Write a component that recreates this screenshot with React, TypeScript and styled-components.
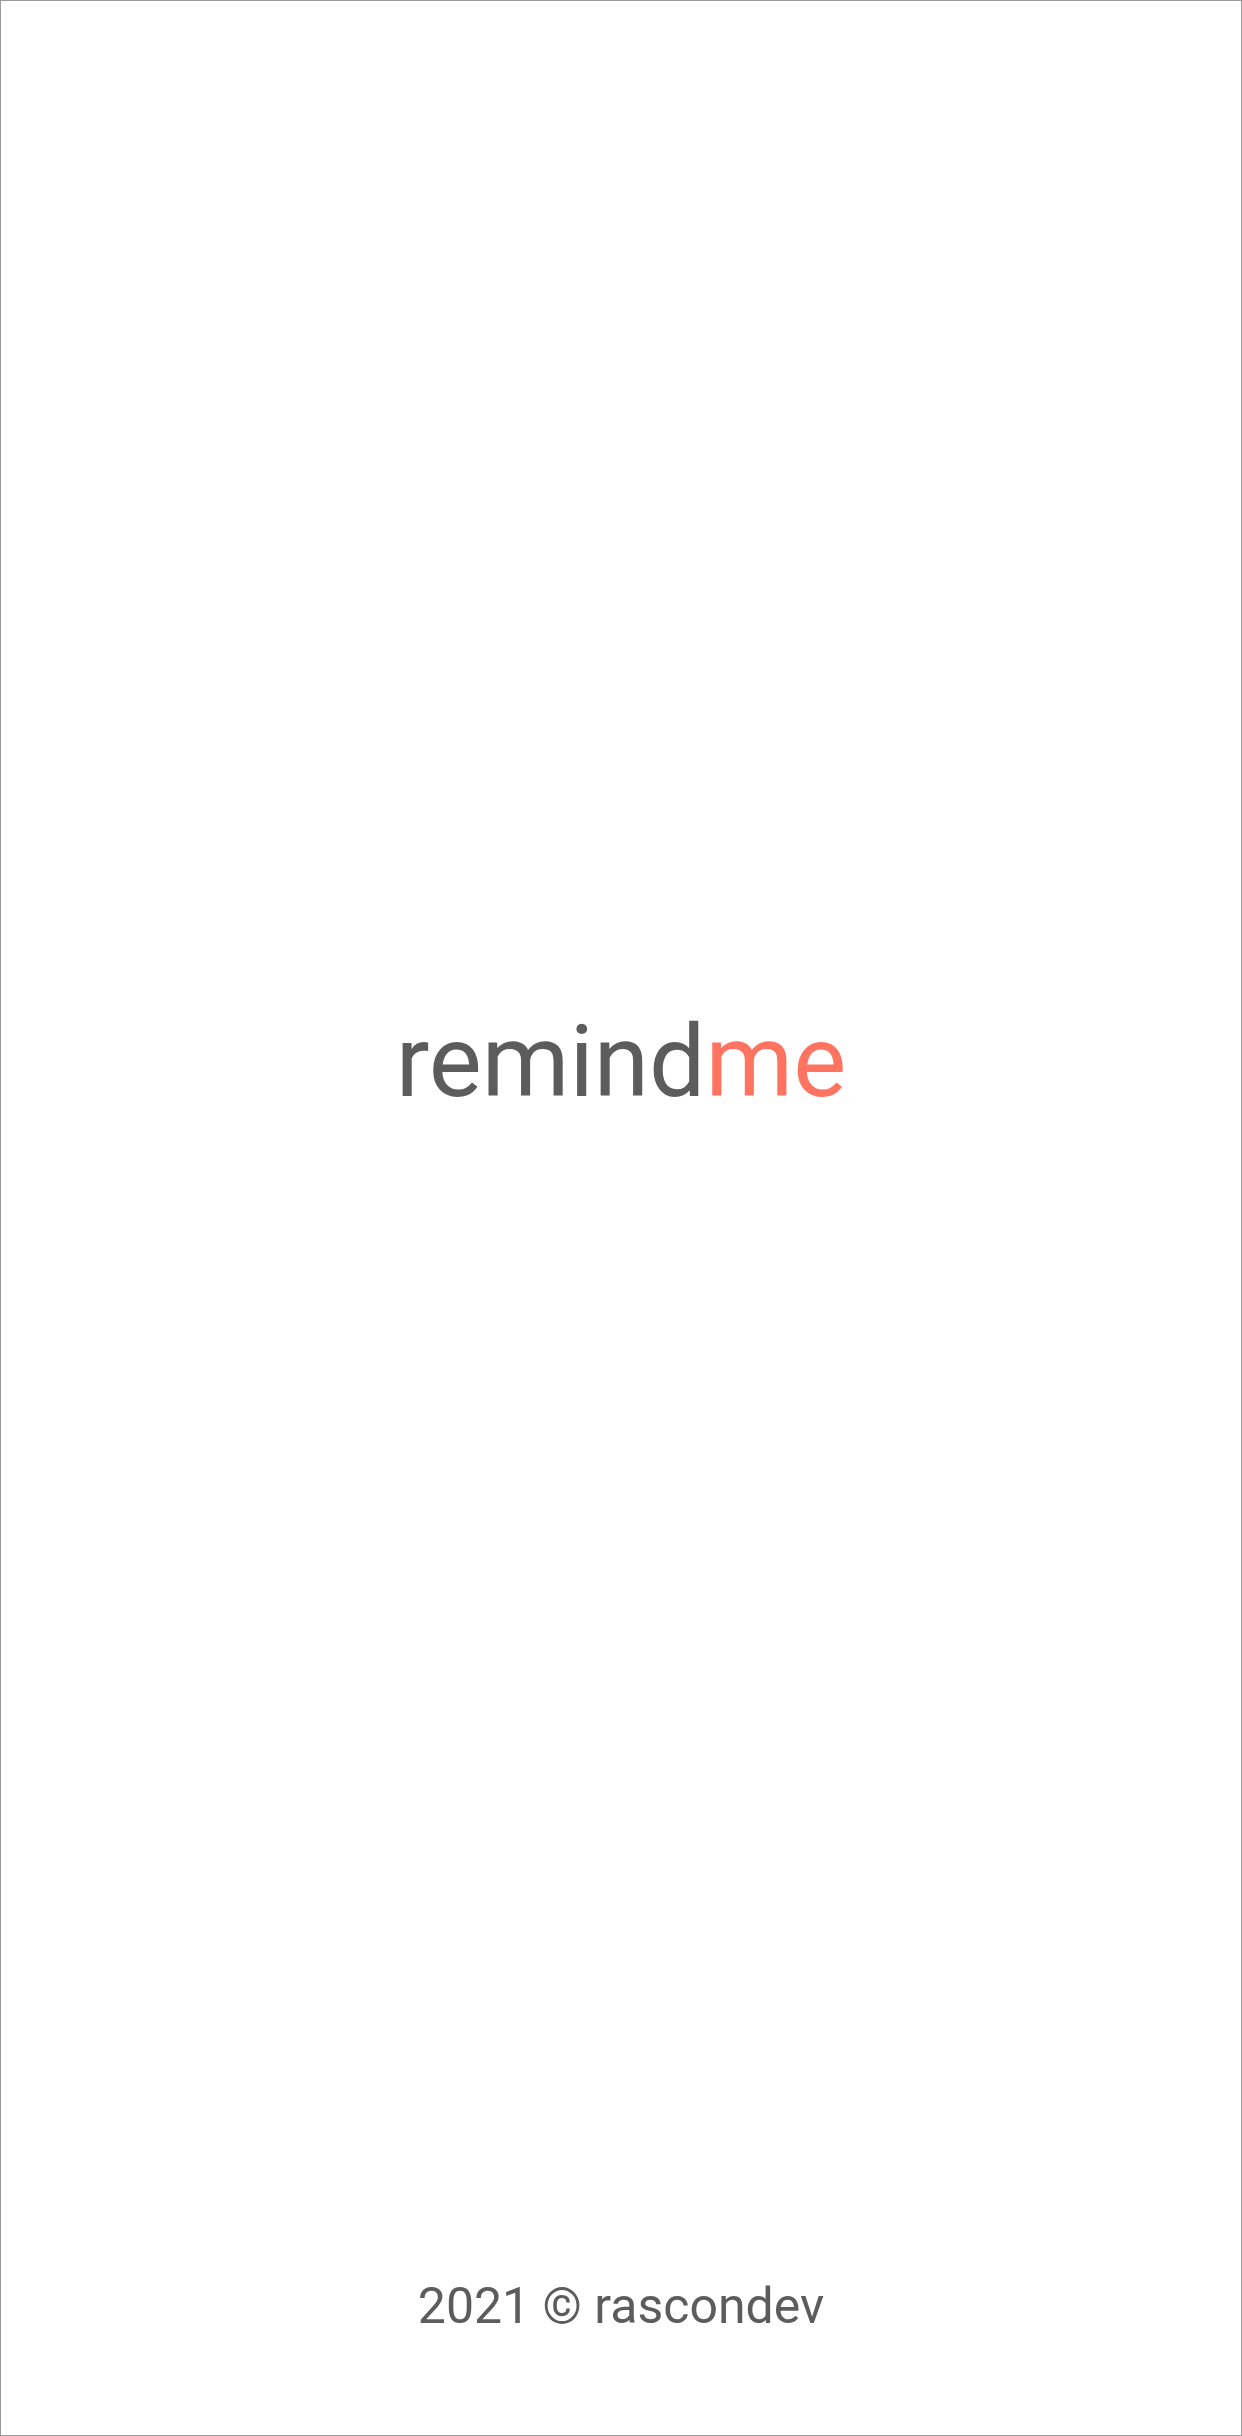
import React from 'react';
import styled, {createGlobalStyle} from "styled-components";

const GlobalStyle = createGlobalStyle`
  html, body {
    margin: 0;
    padding: 0;
    background: #ffffff;
  }
  * {
    box-sizing: border-box;
  }
`

const App = () => {
    return (
        <Screen>
            <GlobalStyle/>
            <Main>
                <Logo>remind<Accent>me</Accent></Logo>
            </Main>
            <Footer>2021 © rascondev</Footer>
        </Screen>
    );
};

const Screen = styled.div`
  width: 1242px;
  height: 2436px;
  border: 1px solid #9a9a9a;
  background-color: #ffffff;
  display: flex;
  flex-direction: column;
  font-family: Roboto, "Liberation Sans", sans-serif;
`
const Main = styled.div`
  flex: 1;
  display: flex;
  align-items: center;
  justify-content: center;
  padding-bottom: 156px;
`
const Logo = styled.h1`
  margin: 0;
  font-size: 100px;
  font-weight: 400;
  line-height: normal;
  color: #5c5c5c;
`
const Accent = styled.span`
  color: #ff7461;
`
const Footer = styled.div`
  text-align: center;
  font-size: 50px;
  line-height: normal;
  color: #5c5c5c;
  padding-bottom: 100px;
`

export default App;
